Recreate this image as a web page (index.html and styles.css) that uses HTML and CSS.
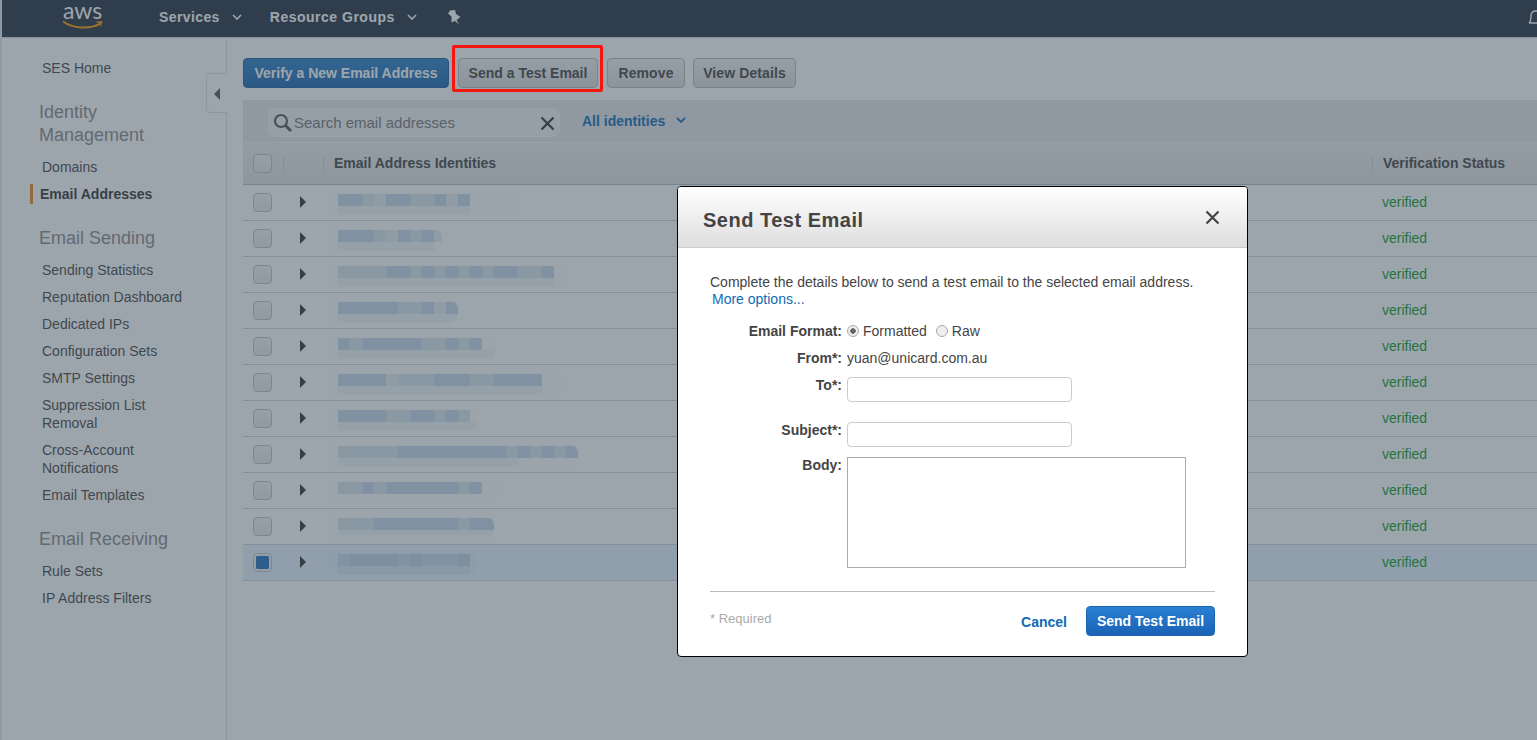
FILE: index.html
```html
<!DOCTYPE html>
<html>
<head>
  <title>SES Email Addresses</title>
  <link rel="stylesheet" href="styles.css">
</head>
<body>
  <header class="nav">
    <div class="logo">
      <span class="logo-text">aws</span>
      <svg class="logo-smile" width="42" height="10" viewBox="0 0 42 10">
        <path d="M1 1.500C11 8.500 27 9.500 38 3.800" fill="none" stroke="#f90" stroke-width="2"/>
        <path d="M33.500 1.800L40.500 1 38.800 7.500 38.200 3.900Z" fill="#f90"/>
      </svg>
    </div>
    <a class="nav-link nav-services">Services</a>
    <svg class="chev" width="10" height="6" viewBox="0 0 10 6"><path d="M1 1l4 4 4-4" fill="none" stroke="#fff" stroke-width="1.600"/></svg>
    <a class="nav-link nav-groups">Resource Groups</a>
    <svg class="chev" width="10" height="6" viewBox="0 0 10 6"><path d="M1 1l4 4 4-4" fill="none" stroke="#fff" stroke-width="1.600"/></svg>
    <svg class="pin" width="13" height="15" viewBox="0 0 13 15"><path d="M2 0.500L7 0 8 4 12.500 7 8.500 10 11 14.500 7 11 3.500 12.500 3.500 6.500 0 3.500Z" fill="#fff"/></svg>
    <svg class="bell" width="12" height="18" viewBox="0 0 12 18"><path d="M1 14c2-2 2-4 2-7s2-5 5-5 4 2 4 3M1 14h11" fill="none" stroke="#fff" stroke-width="1.400"/></svg>
  </header>

  <div class="layout">
    <aside class="sidebar">
      <a class="side-link">SES Home</a>
      <h3 class="side-title">Identity Management</h3>
      <a class="side-link">Domains</a>
      <a class="side-link active">Email Addresses</a>
      <h3 class="side-title">Email Sending</h3>
      <a class="side-link">Sending Statistics</a>
      <a class="side-link">Reputation Dashboard</a>
      <a class="side-link">Dedicated IPs</a>
      <a class="side-link">Configuration Sets</a>
      <a class="side-link">SMTP Settings</a>
      <a class="side-link">Suppression List Removal</a>
      <a class="side-link">Cross-Account Notifications</a>
      <a class="side-link">Email Templates</a>
      <h3 class="side-title">Email Receiving</h3>
      <a class="side-link">Rule Sets</a>
      <a class="side-link">IP Address Filters</a>
      <div class="collapse"><span class="collapse-arrow"></span></div>
    </aside>

    <main class="content">
      <div class="actions">
        <button class="btn btn-primary">Verify a New Email Address</button>
        <button class="btn btn-test">Send a Test Email</button>
        <button class="btn btn-remove">Remove</button>
        <button class="btn btn-details">View Details</button>
      </div>

      <div class="filter-bar">
        <div class="search">
          <svg class="search-icon" width="22" height="22" viewBox="0 0 22 22"><circle cx="9" cy="9" r="6" fill="none" stroke="#555" stroke-width="2.200"/><path d="M13.500 13.500L19 19" stroke="#555" stroke-width="3"/></svg>
          <span class="search-text">Search email addresses</span>
          <svg class="search-clear" width="15" height="15" viewBox="0 0 15 15"><path d="M1.500 1.500l12 12M13.500 1.500l-12 12" stroke="#333" stroke-width="2.200"/></svg>
        </div>
        <a class="filter-link">All identities</a>
        <svg class="filter-chev" width="10" height="6" viewBox="0 0 10 6"><path d="M1 1l4 4 4-4" fill="none" stroke="#0f6bb5" stroke-width="1.800"/></svg>
      </div>

      <div class="row row-head">
        <div class="cell-check"><span class="check"></span></div>
        <div class="cell-arrow"></div>
        <div class="cell-name">Email Address Identities</div>
        <div class="cell-status">Verification Status</div>
      </div>

      <div class="row"><div class="cell-check"><span class="check"></span></div><div class="cell-arrow"><span class="arrow"></span></div><div class="cell-name"><div class="blur blur-1"></div></div><div class="cell-status verified">verified</div></div>
      <div class="row"><div class="cell-check"><span class="check"></span></div><div class="cell-arrow"><span class="arrow"></span></div><div class="cell-name"><div class="blur blur-2"></div></div><div class="cell-status verified">verified</div></div>
      <div class="row"><div class="cell-check"><span class="check"></span></div><div class="cell-arrow"><span class="arrow"></span></div><div class="cell-name"><div class="blur blur-3"></div></div><div class="cell-status verified">verified</div></div>
      <div class="row"><div class="cell-check"><span class="check"></span></div><div class="cell-arrow"><span class="arrow"></span></div><div class="cell-name"><div class="blur blur-4"></div></div><div class="cell-status verified">verified</div></div>
      <div class="row"><div class="cell-check"><span class="check"></span></div><div class="cell-arrow"><span class="arrow"></span></div><div class="cell-name"><div class="blur blur-5"></div></div><div class="cell-status verified">verified</div></div>
      <div class="row"><div class="cell-check"><span class="check"></span></div><div class="cell-arrow"><span class="arrow"></span></div><div class="cell-name"><div class="blur blur-6"></div></div><div class="cell-status verified">verified</div></div>
      <div class="row"><div class="cell-check"><span class="check"></span></div><div class="cell-arrow"><span class="arrow"></span></div><div class="cell-name"><div class="blur blur-7"></div></div><div class="cell-status verified">verified</div></div>
      <div class="row"><div class="cell-check"><span class="check"></span></div><div class="cell-arrow"><span class="arrow"></span></div><div class="cell-name"><div class="blur blur-8"></div></div><div class="cell-status verified">verified</div></div>
      <div class="row"><div class="cell-check"><span class="check"></span></div><div class="cell-arrow"><span class="arrow"></span></div><div class="cell-name"><div class="blur blur-9"></div></div><div class="cell-status verified">verified</div></div>
      <div class="row"><div class="cell-check"><span class="check"></span></div><div class="cell-arrow"><span class="arrow"></span></div><div class="cell-name"><div class="blur blur-10"></div></div><div class="cell-status verified">verified</div></div>
      <div class="row row-selected"><div class="cell-check"><span class="check checked"></span></div><div class="cell-arrow"><span class="arrow"></span></div><div class="cell-name"><div class="blur blur-11"></div></div><div class="cell-status verified">verified</div></div>
    </main>
  </div>

  <div class="backdrop"></div>
  <div class="highlight"></div>

  <div class="modal">
    <div class="modal-head">
      <h2 class="modal-title">Send Test Email</h2>
      <svg class="modal-close" width="15" height="15" viewBox="0 0 15 15"><path d="M1.500 1.500l12 12M13.500 1.500l-12 12" stroke="#444" stroke-width="2.200"/></svg>
    </div>
    <div class="modal-body">
      <p class="intro">Complete the details below to send a test email to the selected email address.<br><a class="more">More options...</a></p>
      <div class="form">
        <label class="form-label">Email Format:</label>
        <div class="radios">
          <input class="radio" type="radio" name="format" checked><span>Formatted</span>
          <input class="radio radio-raw" type="radio" name="format"><span>Raw</span>
        </div>
        <label class="form-label row-from">From*:</label>
        <div class="from-value">yuan@unicard.com.au</div>
        <label class="form-label row-to">To*:</label>
        <input class="text-input input-to" type="text">
        <label class="form-label row-subject">Subject*:</label>
        <input class="text-input input-subject" type="text">
        <label class="form-label row-body">Body:</label>
        <textarea class="body-input"></textarea>
      </div>
      <div class="modal-foot">
        <span class="required">* Required</span>
        <a class="cancel">Cancel</a>
        <button class="btn-send">Send Test Email</button>
      </div>
    </div>
  </div>
</body>
</html>
```

FILE: styles.css
```css
/* page under the dialog */
:root {
  --d: #c5d8e8;
  --m: #d8e5ef;
  --l: #e2ebf1;
  --v: #fafbfc;
  --s: #f0f4f7;
}
html, body {
  height: 100%;
}
body {
  margin: 0;
  width: 1537px;
  height: 740px;
  overflow: hidden;
  border-left: 2px solid #e6e8ea;
  box-sizing: border-box;
  background-color: #fff;
  font-family: "Liberation Sans", Arial, sans-serif;
  font-size: 14px;
  color: #444;
}
.nav {
  display: flex;
  align-items: center;
  height: 33px;
  padding-bottom: 4px;
  background-color: #232f3e;
  border-bottom: 1px solid #cdd2d6;
}
.logo {
  width: 157px;
  height: 33px;
  flex: none;
  padding: 1px 0 0 61px;
  box-sizing: border-box;
}
.logo-text {
  display: block;
  height: 18px;
  font-family: Lato, sans-serif;
  font-size: 23px;
  line-height: 18px;
  color: #fff;
}
.logo-smile {
  display: block;
  margin: 1px 0 0 -1px;
}
.nav-link {
  font-weight: bold;
  color: #fff;
  letter-spacing: 0.4px;
}
.nav-groups {
  letter-spacing: 0.5px;
}
.chev {
  margin-left: 12px;
  margin-right: 28px;
}
.nav-groups + .chev {
  margin-right: 31px;
}
.pin {
  margin-top: 1px;
}
.bell {
  margin-left: auto;
  margin-right: -3px;
  margin-top: 2px;
}
.layout {
  display: flex;
  height: 702px;
}

/* sidebar */
.sidebar {
  position: relative;
  flex: none;
  display: flex;
  flex-direction: column;
  gap: 9px;
  width: 225px;
  box-sizing: border-box;
  padding: 21px 0 0 40px;
  border-right: 1px solid #dde0e3;
}
.side-link {
  width: 150px;
  line-height: 18px;
  color: #444;
}
.side-link.active {
  position: relative;
  margin-left: -2px;
  font-weight: bold;
  color: #333;
}
.side-link.active::before {
  content: "";
  position: absolute;
  left: -10px;
  top: -1px;
  width: 3px;
  height: 20px;
  background-color: #e88b1c;
}
.side-title {
  width: 130px;
  margin: 15px 0 2px -3px;
  font-size: 18px;
  font-weight: normal;
  line-height: 23px;
  color: #888;
}
.collapse {
  position: absolute;
  left: 204px;
  top: 35px;
  width: 21px;
  height: 40px;
  box-sizing: border-box;
  border: 1px solid #dde0e3;
  border-right: none;
  border-radius: 4px 0 0 4px;
  background-color: #fff;
}
.collapse-arrow {
  position: absolute;
  left: 7px;
  top: 14px;
  border-style: solid;
  border-width: 6px 6px 6px 0;
  border-color: transparent #555 transparent transparent;
}

/* main column */
.content {
  flex: 1;
  min-width: 0;
  padding-left: 16px;
}
.actions {
  display: flex;
  gap: 8px;
  height: 30px;
  padding: 20px 0 12px;
}
.btn {
  height: 30px;
  padding: 0;
  white-space: nowrap;
  border: 1px solid #bbb;
  border-radius: 4px;
  background: linear-gradient(#f2f2f2, #dcdcdc);
  font-family: inherit;
  font-size: 14px;
  font-weight: bold;
  color: #444;
}
.btn-primary {
  width: 206px;
  border-color: #1b5d9f;
  background: linear-gradient(#2a80c9, #1a65ae);
  color: #fff;
}
.btn-test {
  width: 140px;
  margin: 0 1px;
}
.btn-remove {
  width: 78px;
  letter-spacing: 0.1px;
}
.btn-details {
  width: 103px;
  letter-spacing: 0.1px;
}
.filter-bar {
  display: flex;
  align-items: center;
  height: 41px;
  padding: 1px 0 0 25px;
  background-color: #e4e6e8;
  border-bottom: 1px solid #f3f4f5;
}
.search {
  position: relative;
  display: flex;
  align-items: center;
  width: 292px;
  height: 29px;
  margin-top: 2px;
  box-sizing: border-box;
  border: 1px solid #f4f5f6;
  border-radius: 7px;
  background-color: #f0f2f3;
}
.search-icon {
  margin-left: 3px;
}
.search-text {
  font-size: 15px;
  color: #777;
}
.search-clear {
  position: absolute;
  right: 4px;
  top: 7px;
}
.filter-link {
  margin-left: 22px;
  margin-top: -1px;
  font-weight: bold;
  color: #0f6bb5;
}
.filter-chev {
  margin-left: 11px;
  margin-top: -3px;
}
.row {
  display: flex;
  align-items: center;
  height: 35px;
  border-bottom: 1px solid #cfd2d5;
}
.row-head {
  height: 41px;
  background: linear-gradient(#ededed, #e0e1e2);
  border-bottom: 1px solid #b5b9bd;
  font-weight: bold;
  color: #444;
}
.row-selected {
  background-color: #e6f3ff;
}
.cell-check {
  display: flex;
  width: 40px;
  flex: none;
  padding-left: 10px;
  box-sizing: border-box;
}
.cell-arrow {
  width: 40px;
  height: 18px;
  flex: none;
  padding-left: 17px;
  box-sizing: border-box;
}
.cell-name {
  flex: none;
  width: 1049px;
  padding-left: 11px;
  box-sizing: border-box;
}
.cell-status {
  padding-left: 10px;
  margin-top: -2px;
}
.row-head .cell-arrow,
.row-head .cell-name,
.row-head .cell-status {
  height: 18px;
  line-height: 16px;
  border-left: 1px solid #cfd2d5;
}
.row-head .cell-name {
  padding-left: 10px;
}
.row-head .cell-status {
  margin-top: 0;
}
.check {
  display: block;
  width: 19px;
  height: 19px;
  box-sizing: border-box;
  border: 1px solid #bdc1c5;
  border-radius: 4px;
  background: linear-gradient(#f4f4f4, #e8e8e8);
}
.checked {
  background: #1e6fbd content-box;
  padding: 2px;
  box-shadow: inset 0 0 0 2px #f0f0f0;
}
.arrow {
  display: block;
  margin-top: 2px;
  width: 0;
  height: 0;
  border-style: solid;
  border-width: 6px 0 6px 6px;
  border-color: transparent transparent transparent #333;
}
.verified {
  color: #0a9a1e;
}

/* blurred addresses: 12px pixel cells on a faint smear */
.blur {
  margin-left: -6px;
  margin-top: 2px;
  height: 23px;
  border-radius: 9px;
  background-color: var(--v);
  background-repeat: no-repeat;
  background-position: 10px 2px, 10px 14px;
}
.blur-1 {
  width: 187px;
  background-image: linear-gradient(90deg, var(--d) 24px, var(--m) 24px 36px, var(--l) 36px 48px, var(--d) 48px 72px, var(--m) 72px 96px, var(--d) 96px 108px, var(--l) 108px 120px, var(--d) 120px 132px, var(--v) 132px), linear-gradient(var(--s), var(--s));
  background-size: 144px 12px, 132px 9px;
}
.blur-2 {
  width: 114px;
  background-image: linear-gradient(90deg, var(--d) 36px, var(--m) 36px 48px, var(--l) 48px 60px, var(--d) 60px 72px, var(--m) 72px 84px, var(--d) 84px 96px, var(--l) 96px 108px), linear-gradient(var(--s), var(--s));
  background-size: 108px 12px, 96px 9px;
}
.blur-3 {
  width: 240px;
  background-image: linear-gradient(90deg, var(--m) 48px, var(--d) 48px 72px, var(--m) 72px 84px, var(--d) 84px 96px, var(--m) 96px 108px, var(--d) 108px 120px, var(--m) 120px 132px, var(--d) 132px 144px, var(--m) 144px 156px, var(--d) 156px 180px, var(--m) 180px 204px, var(--d) 204px 216px, var(--v) 216px), linear-gradient(var(--s), var(--s));
  background-size: 228px 12px, 216px 9px;
}
.blur-4 {
  width: 130px;
  background-image: linear-gradient(90deg, var(--d) 60px, var(--m) 60px 84px, var(--d) 84px 96px, var(--l) 96px 108px, var(--d) 108px 120px), linear-gradient(var(--s), var(--s));
  background-size: 120px 12px, 120px 12px;
}
.blur-5 {
  width: 168px;
  background-image: linear-gradient(90deg, var(--d) 12px, var(--m) 12px 24px, var(--d) 24px 84px, var(--m) 84px 108px, var(--d) 108px 120px, var(--m) 120px 132px, var(--d) 132px 144px, var(--v) 144px), linear-gradient(var(--s), var(--s));
  background-size: 156px 12px, 156px 10px;
}
.blur-6 {
  width: 236px;
  background-image: linear-gradient(90deg, var(--d) 48px, var(--l) 48px 60px, var(--m) 60px 96px, var(--d) 96px 132px, var(--m) 132px 156px, var(--d) 156px 204px, var(--v) 204px), linear-gradient(var(--s), var(--s));
  background-size: 216px 12px, 204px 10px;
}
.blur-7 {
  width: 150px;
  background-image: linear-gradient(90deg, var(--d) 48px, var(--m) 48px 72px, var(--d) 72px 96px, var(--m) 96px 108px, var(--d) 108px 120px, var(--m) 120px 132px), linear-gradient(var(--s), var(--s));
  background-size: 132px 12px, 144px 12px;
}
.blur-8 {
  width: 250px;
  background-image: linear-gradient(90deg, var(--m) 60px, var(--d) 60px 168px, var(--m) 168px 180px, var(--d) 180px 192px, var(--m) 192px 204px, var(--d) 204px 216px, var(--m) 216px 228px, var(--d) 228px 240px), linear-gradient(var(--s), var(--s));
  background-size: 240px 12px, 180px 10px;
}
.blur-9 {
  width: 170px;
  background-image: linear-gradient(90deg, var(--m) 24px, var(--d) 24px 36px, var(--m) 36px 48px, var(--d) 48px 120px, var(--m) 120px 132px, var(--d) 132px 144px, var(--v) 144px);
  background-size: 156px 12px;
}
.blur-10 {
  width: 166px;
  background-image: linear-gradient(90deg, var(--m) 36px, var(--d) 36px 120px, var(--m) 120px 132px, var(--d) 132px 156px), linear-gradient(var(--s), var(--s));
  background-size: 156px 12px, 156px 5px;
}
.blur-11 {
  width: 150px;
  background-color: #dfeefa;
  background-image: linear-gradient(90deg, #c6dceb 12px, #bed5e6 12px 60px, #c6dceb 60px 72px, #bed5e6 72px 84px, #c6dceb 84px 120px, #bed5e6 120px 132px), linear-gradient(#d6e6f2, #d6e6f2);
  background-size: 132px 12px, 132px 9px;
}

/* dialog layer */
.backdrop {
  position: fixed;
  inset: 0;
  background-color: rgba(59, 75, 89, 0.5);
}
.highlight {
  position: fixed;
  left: 452px;
  top: 45px;
  width: 151px;
  height: 47px;
  box-sizing: border-box;
  border: 3px solid #f5170f;
  border-radius: 2px;
}
.modal {
  position: fixed;
  left: 677px;
  top: 186px;
  width: 571px;
  height: 471px;
  box-sizing: border-box;
  border: 1px solid #000;
  border-radius: 4px;
  background-color: #fff;
  overflow: hidden;
}
.modal-head {
  display: flex;
  align-items: center;
  justify-content: space-between;
  height: 60px;
  padding: 0 27px 0 25px;
  background: linear-gradient(#fff, #dedede);
  border-bottom: 1px solid #ccc;
}
.modal-title {
  margin: 6px 0 0;
  font-size: 20px;
  font-weight: bold;
  letter-spacing: 0.5px;
  color: #444;
}
.modal-body {
  padding: 26px 32px 0;
}
.intro {
  margin: 0;
  line-height: 17px;
  color: #444;
}
.more {
  margin-left: 2px;
  color: #0f6bb5;
}
.form {
  display: grid;
  grid-template-columns: 132px 1fr;
  column-gap: 5px;
  align-items: start;
  margin-top: 15px;
}
.form-label {
  text-align: right;
  font-weight: bold;
  line-height: 17px;
  color: #444;
}
.radios {
  display: flex;
  align-items: center;
  height: 17px;
  margin-top: -1px;
}
.radio {
  appearance: none;
  width: 12px;
  height: 12px;
  margin: 0 4px 0 0;
  border: 1px solid #aaa;
  border-radius: 50%;
  background: #eee;
}
.radio:checked {
  background: radial-gradient(#666 0 2.500px, #eee 3px);
}
.radio-raw {
  margin-left: 9px;
}
.row-from,
.from-value {
  margin-top: 10px;
  line-height: 17px;
}
.row-to,
.input-to {
  margin-top: 10px;
}
.row-subject,
.input-subject {
  margin-top: 20px;
}
.row-body,
.body-input {
  margin-top: 10px;
}
.text-input {
  width: 225px;
  height: 25px;
  padding: 0;
  box-sizing: border-box;
  border: 1px solid #ccc;
  border-radius: 4px;
  background: #fff;
}
.body-input {
  display: block;
  width: 339px;
  height: 111px;
  padding: 0;
  box-sizing: border-box;
  border: 1px solid #aaa;
  border-radius: 0;
  resize: none;
}
.modal-foot {
  display: flex;
  align-items: flex-start;
  margin-top: 23px;
  padding-top: 14px;
  border-top: 1px solid #bbb;
}
.required {
  margin-top: 5px;
  font-size: 13px;
  line-height: 16px;
  color: #aaa;
}
.cancel {
  margin-left: auto;
  margin-top: 8px;
  font-weight: bold;
  color: #0f6bb5;
}
.btn-send {
  width: 129px;
  height: 30px;
  margin-left: 19px;
  padding: 0;
  border: 1px solid #1a65ae;
  border-radius: 4px;
  background: linear-gradient(#2a80d4, #1a62b4);
  font-family: inherit;
  font-size: 14px;
  font-weight: bold;
  color: #fff;
}
```
